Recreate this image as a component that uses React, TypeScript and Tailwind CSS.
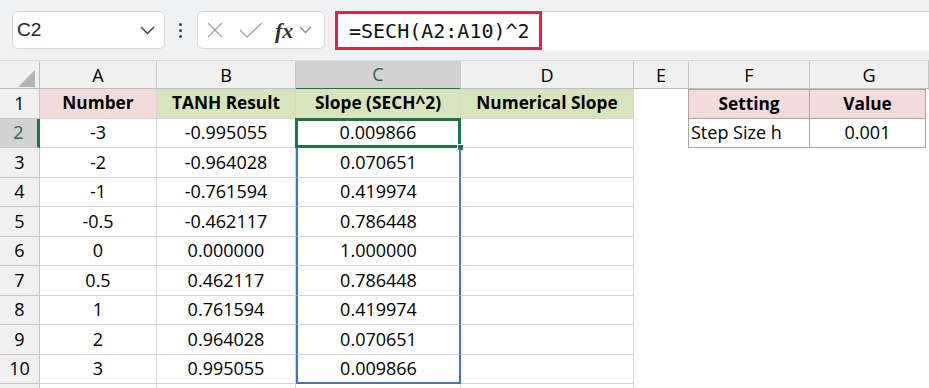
import React from 'react'

const cols = ['A', 'B', 'C', 'D', 'E', 'F', 'G']

const rows: [string, string, string][] = [
  ['-3', '-0.995055', '0.009866'],
  ['-2', '-0.964028', '0.070651'],
  ['-1', '-0.761594', '0.419974'],
  ['-0.5', '-0.462117', '0.786448'],
  ['0', '0.000000', '1.000000'],
  ['0.5', '0.462117', '0.786448'],
  ['1', '0.761594', '0.419974'],
  ['2', '0.964028', '0.070651'],
  ['3', '0.995055', '0.009866'],
]

const grid = 'grid grid-cols-[40px_117px_139px_165px_173px_55px_121px_1fr]'
const cell = 'flex items-center justify-center border-r border-b border-[#d4d4d4] text-[18px] text-black'
const head = 'flex items-center justify-center border-r border-b border-[#d4d4d4] text-[17.3px] font-bold text-black'

function Chevron() {
  return (
    <svg width="15" height="9" viewBox="0 0 15 9" fill="none" stroke="#444" strokeWidth="1.5">
      <path d="M1 1l6.5 6.5L14 1" />
    </svg>
  )
}

function Toolbar() {
  return (
    <div className="flex h-[61px] items-center bg-[#f0f1f2] pl-[12px] border-b border-[#d9d9d9]">
      <div className="flex h-[38px] w-[153px] items-center justify-between rounded-md border border-[#d6d6d6] bg-white pl-[4px] pr-[9px]">
        <span className="text-[19px] text-[#222]" style={{ fontFamily: '"Liberation Sans", Arial, sans-serif' }}>C2</span>
        <Chevron />
      </div>
      <div className="ml-[14px] mr-[15px] flex flex-col gap-[3px]">
        <span className="h-[3px] w-[3px] rounded-full bg-[#444]" />
        <span className="h-[3px] w-[3px] rounded-full bg-[#444]" />
        <span className="h-[3px] w-[3px] rounded-full bg-[#444]" />
      </div>
      <div className="flex h-[38px] w-[128px] items-center rounded-md border border-[#d6d6d6] bg-white pl-[9px]">
        <svg width="16" height="16" viewBox="0 0 16 16" stroke="#a0a0a0" strokeWidth="1.3">
          <path d="M1 1l14 14M15 1L1 15" />
        </svg>
        <svg className="ml-[16px]" width="24" height="16" viewBox="0 0 24 16" fill="none" stroke="#a0a0a0" strokeWidth="1.3">
          <path d="M1 8l7 7L23 1" />
        </svg>
        <span className="ml-[12px] text-[22px] italic font-bold text-[#333]" style={{ fontFamily: '"Liberation Serif", serif' }}>fx</span>
        <svg className="ml-[6px]" width="13" height="8" viewBox="0 0 13 8" fill="none" stroke="#888" strokeWidth="1.3">
          <path d="M1 1l5.5 5.5L12 1" />
        </svg>
      </div>
      <div className="ml-[10px] flex h-[39px] flex-1 items-center border-t border-[#d6d6d6] bg-white">
        <div className="flex h-[39px] w-[207px] items-center border-[3px] border-[#e0234e] pl-[11px]">
          <span className="text-[20px] text-[#111]" style={{ fontFamily: '"DejaVu Sans Mono", monospace' }}>=SECH(A2:A10)^2</span>
        </div>
      </div>
    </div>
  )
}

export default function App() {
  return (
    <div className="h-[388px] w-[929px] overflow-hidden bg-white" style={{ fontFamily: '"Open Sans", "Noto Sans", sans-serif' }}>
      <Toolbar />
      {/* column headers */}
      <div className={`${grid} h-[28px] bg-[#f0f0f0] border-b border-[#bdbdbd]`}>
        <div className="relative border-r border-[#bdbdbd]">
          <div className="absolute bottom-[3px] right-[4px] h-0 w-0" style={{ borderBottom: '17px solid #b4b4b4', borderLeft: '17px solid transparent' }} />
        </div>
        {cols.map((c) => (
          <div
            key={c}
            className={`flex items-center justify-center border-r border-[#c8c8c8] text-[18px] ${c === 'C' ? 'bg-[#d2d2d2] text-[#1e6b3e] border-b-2 border-b-[#217346]' : 'text-black'}`}
          >
            {c}
          </div>
        ))}
        <div />
      </div>

      {/* row 1 */}
      <div className={`${grid} h-[29.5px]`}>
        <div className="flex items-center justify-center border-r border-b border-[#c8c8c8] bg-[#f0f0f0] text-[18px]">1</div>
        <div className={`${head} bg-[#f2dcdb]`}>Number</div>
        <div className={`${head} bg-[#d8e4bc]`}>TANH Result</div>
        <div className={`${head} bg-[#d8e4bc]`}>Slope (SECH^2)</div>
        <div className={`${head} bg-[#d8e4bc]`}>Numerical Slope</div>
        <div className="border-r border-[#a6a6a6]" />
        <div className="flex items-center justify-center border-r border-b border-t border-[#a6a6a6] bg-[#f2dcdb] text-[17.3px] font-bold">Setting</div>
        <div className="flex w-[116px] items-center justify-center border-r border-b border-t border-[#a6a6a6] bg-[#f2dcdb] text-[17.3px] font-bold">Value</div>
      </div>

      {rows.map((r, i) => {
        const n = i + 2
        const sel = n === 2
        const last = n === 10
        return (
          <div key={n} className={`${grid} h-[29.5px]`}>
            <div
              className={`flex items-center justify-center border-r border-b border-[#c8c8c8] text-[18px] ${sel ? 'bg-[#d2d2d2] text-[#1e6b3e] border-r-[3px] border-r-[#217346]' : 'bg-[#f0f0f0] text-black'}`}
            >
              {n}
            </div>
            <div className={cell}>{r[0]}</div>
            <div className={cell}>{r[1]}</div>
            <div
              className={`${cell} relative ${sel ? '' : 'border-l-2 border-l-[#4472c4] border-r-2 border-r-[#4472c4]'} ${last ? 'border-b-2 border-b-[#4472c4]' : ''}`}
            >
              {r[2]}
              {sel && (
                <>
                  <div className="absolute -left-[1px] -top-[1px] bottom-[-1px] right-[-1px] border-[3px] border-[#217346]" />
                  <div className="absolute -bottom-[4px] -right-[4px] h-[7px] w-[7px] border border-white bg-[#217346]" />
                </>
              )}
            </div>
            <div className={cell} />
            {sel ? (
              <>
                <div className="border-r border-[#a6a6a6]" />
                <div className="flex items-center border-r border-b border-[#a6a6a6] pl-[2px] text-[18px]">Step Size h</div>
                <div className="flex w-[116px] items-center justify-center border-r border-b border-[#a6a6a6] text-[18px]">0.001</div>
              </>
            ) : (
              <>
                <div />
                <div />
                <div />
              </>
            )}
          </div>
        )
      })}
      <div className={`${grid} h-[10px]`}>
        <div className="border-r border-[#c8c8c8] bg-[#f0f0f0]" />
        <div className="border-r border-[#d4d4d4]" />
        <div className="border-r border-[#d4d4d4]" />
        <div className="border-r border-[#d4d4d4]" />
        <div className="border-r border-[#d4d4d4]" />
      </div>
    </div>
  )
}
